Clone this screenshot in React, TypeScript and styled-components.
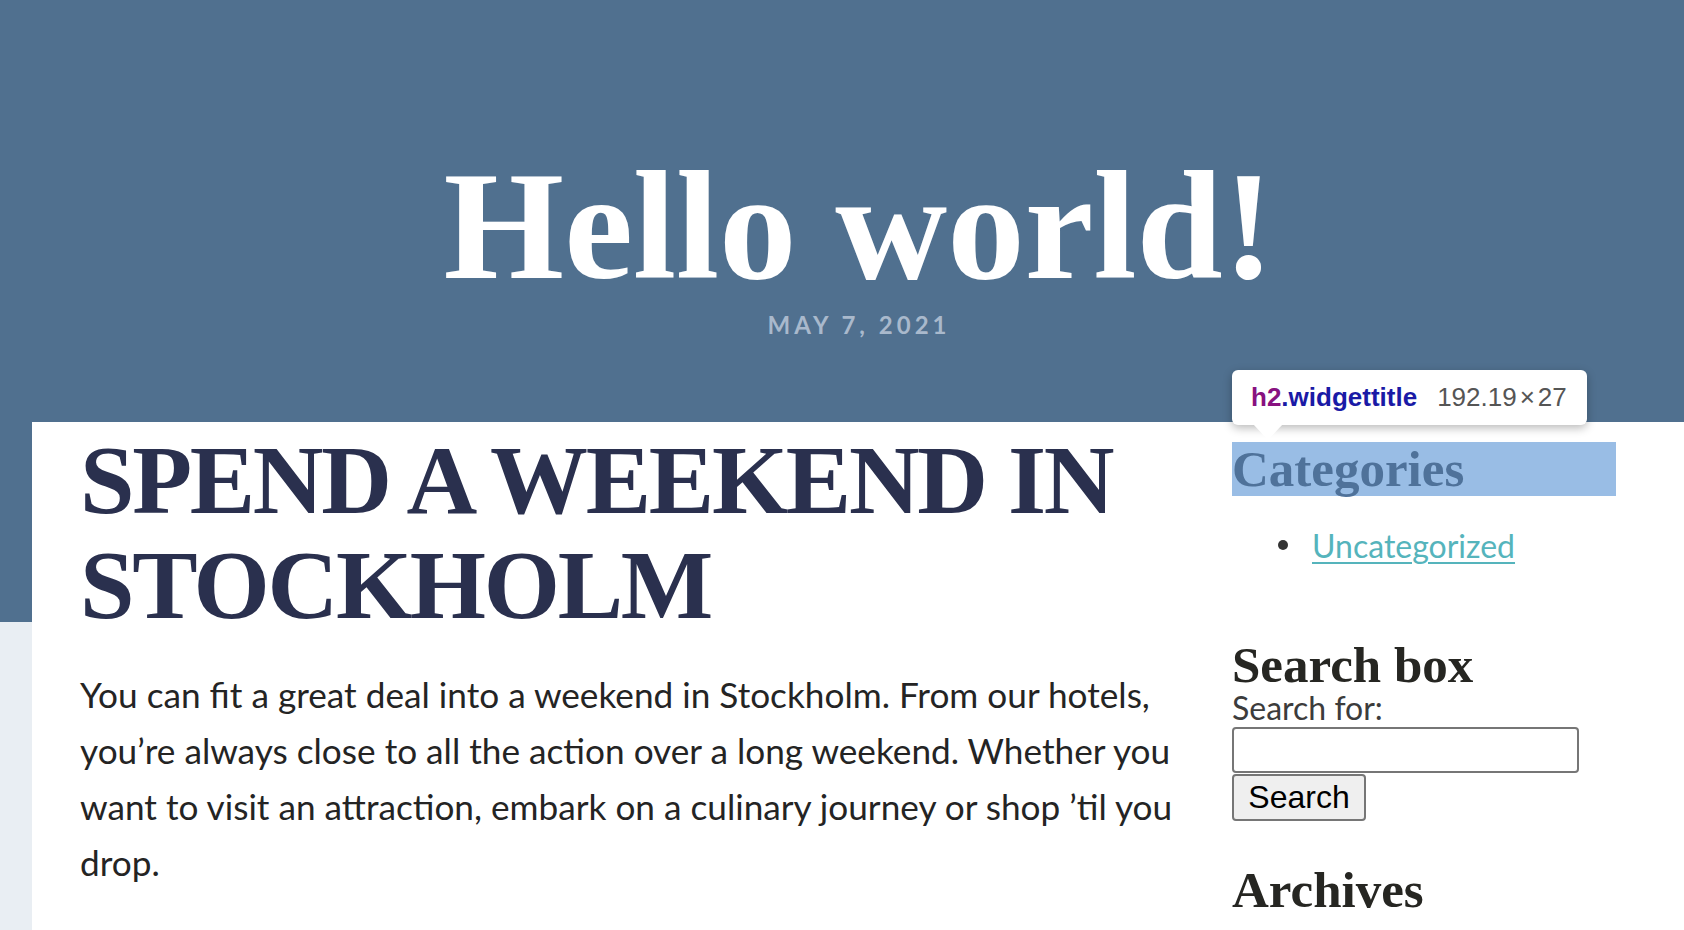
import React from "react";
import styled, { createGlobalStyle } from "styled-components";

const GlobalStyle = createGlobalStyle`
  html, body { margin: 0; padding: 0; }
  body { font-family: Lato, "Noto Sans", sans-serif; background: #e9eef3; }
  * { box-sizing: border-box; }
`;

const Page = styled.div`
  min-height: 930px;
  background: linear-gradient(to bottom, #50708f 0, #50708f 622px, #e9eef3 622px);
  overflow: hidden;
`;

const Header = styled.header`
  height: 422px;
  padding: 149px 0 0 34px;
  display: flex;
  flex-direction: column;
  align-items: center;
`;

const SiteTitle = styled.h1`
  margin: 0;
  font-family: "Liberation Serif", "Times New Roman", serif;
  font-weight: 700;
  font-size: 155px;
  line-height: 154px;
  color: #ffffff;
`;

const DateLine = styled.div`
  margin-top: 10px;
  font-family: Lato, sans-serif;
  font-weight: 700;
  font-size: 24px;
  line-height: 24px;
  letter-spacing: 4px;
  color: #a9b9cc;
`;

const Card = styled.main`
  margin-left: 32px;
  background: #ffffff;
  min-height: 508px;
  display: flex;
  gap: 32px;
  padding-left: 48px;
`;

const Article = styled.article`
  width: 1120px;
  padding-top: 6px;
`;

const PostTitle = styled.h2`
  margin: 0;
  font-family: "Liberation Serif", "Times New Roman", serif;
  font-weight: 700;
  font-size: 98px;
  line-height: 105px;
  letter-spacing: -2.3px;
  color: #2a304e;
`;

const Paragraph = styled.p`
  margin: 28px 0 0;
  font-family: Lato, sans-serif;
  font-size: 35.2px;
  line-height: 56px;
  color: #242424;
`;

const Sidebar = styled.aside`
  width: 384px;
  padding-top: 20px;
  display: flex;
  flex-direction: column;
`;

const Widget = styled.section<{ $gap?: number }>`
  position: relative;
  margin-bottom: ${(p) => p.$gap ?? 0}px;
`;

const WidgetTitle = styled.h2<{ $highlight?: boolean }>`
  margin: 0;
  font-family: "Liberation Serif", "Times New Roman", serif;
  font-weight: 700;
  font-size: 51px;
  line-height: 54px;
  height: 54px;
  color: ${(p) => (p.$highlight ? "#4f729a" : "#262622")};
  background: ${(p) => (p.$highlight ? "#99bde5" : "transparent")};
`;

const List = styled.ul`
  list-style: none;
  margin: 21px 0 0;
  padding: 0 0 0 46px;
`;

const Item = styled.li`
  display: flex;
  align-items: center;
  height: 56px;
  font-family: Lato, sans-serif;
  font-size: 32px;
  &::before {
    content: "";
    width: 10px;
    height: 10px;
    border-radius: 50%;
    background: #333;
    margin-right: 24px;
    flex-shrink: 0;
  }
`;

const Link = styled.a`
  color: #55b4bc;
  text-decoration: underline;
  text-decoration-thickness: 2px;
  text-underline-offset: 4px;
`;

const Label = styled.label`
  display: block;
  font-family: Lato, sans-serif;
  font-size: 32px;
  line-height: 32px;
  color: #3c3c3c;
`;

const SearchInput = styled.input`
  display: block;
  margin-top: 3px;
  width: 347px;
  height: 46px;
  border: 2px solid #767676;
  border-radius: 4px;
  background: #fff;
`;

const SearchButton = styled.button`
  display: block;
  margin-top: 1px;
  width: 134px;
  height: 47px;
  border: 2px solid #767676;
  border-radius: 4px;
  background: #efefef;
  font-family: "Liberation Sans", Arial, sans-serif;
  font-size: 32px;
  color: #000;
  padding: 0;
`;

const Tooltip = styled.div`
  position: absolute;
  left: 0;
  top: -72px;
  width: 355px;
  height: 55px;
  background: #fff;
  border-radius: 6px;
  box-shadow: 0 3px 10px rgba(0, 0, 0, 0.28);
  padding: 0 0 0 19px;
  display: flex;
  align-items: center;
  font-family: "Liberation Sans", Arial, sans-serif;
  font-size: 26px;
  line-height: 55px;
  white-space: nowrap;
  z-index: 2;
  &::after {
    content: "";
    position: absolute;
    left: 21px;
    bottom: -15px;
    width: 0;
    height: 0;
    border-left: 15px solid transparent;
    border-right: 15px solid transparent;
    border-top: 16px solid #fff;
  }
`;

const Tag = styled.span`
  font-weight: 700;
  color: #881280;
`;

const ClassName = styled.span`
  font-weight: 700;
  color: #1a1aa6;
`;

const Size = styled.span`
  margin-left: 20px;
  color: #555;
`;

const Times = styled.span`
  margin: 0 3px;
`;

export default function App() {
  return (
    <>
      <GlobalStyle />
      <Page>
        <Header>
          <SiteTitle>Hello world!</SiteTitle>
          <DateLine>MAY 7, 2021</DateLine>
        </Header>
        <Card>
          <Article>
            <PostTitle>
              SPEND A WEEKEND IN
              <br />
              STOCKHOLM
            </PostTitle>
            <Paragraph>
              You can fit a great deal into a weekend in Stockholm. From our hotels,
              you’re always close to all the action over a long weekend. Whether you
              want to visit an attraction, embark on a culinary journey or shop ’til you
              drop.
            </Paragraph>
          </Article>
          <Sidebar>
            <Widget $gap={65}>
              <Tooltip>
                <Tag>h2</Tag>
                <ClassName>.widgettitle</ClassName>
                <Size>
                  192.19<Times>×</Times>27
                </Size>
              </Tooltip>
              <WidgetTitle $highlight>Categories</WidgetTitle>
              <List>
                <Item>
                  <Link href="#">Uncategorized</Link>
                </Item>
              </List>
            </Widget>
            <Widget $gap={42}>
              <WidgetTitle>Search box</WidgetTitle>
              <Label htmlFor="s">Search for:</Label>
              <SearchInput id="s" type="text" />
              <SearchButton type="button">Search</SearchButton>
            </Widget>
            <Widget>
              <WidgetTitle>Archives</WidgetTitle>
            </Widget>
          </Sidebar>
        </Card>
      </Page>
    </>
  );
}
